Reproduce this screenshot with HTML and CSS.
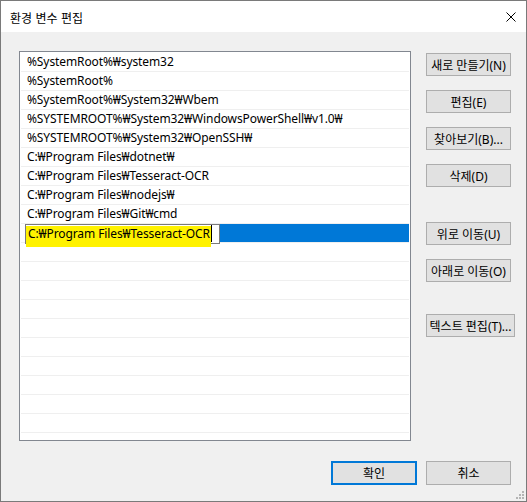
FILE: index.html
```html
<!DOCTYPE html>
<html lang="ko">
<head>
    <meta charset="UTF-8">
    <title>환경 변수 편집</title>
    <link rel="stylesheet" href="styles.css">
</head>
<body>

<div class="window">
    <div class="titlebar">
        <span class="title">환경 변수 편집</span>
        <svg class="close" width="10" height="10" viewBox="0 0 10 10">
            <path d="M0.5 0.5 L9.5 9.5 M9.5 0.5 L0.5 9.5" stroke="#000" stroke-width="1"/>
        </svg>
    </div>

    <div class="content">
        <!-- 경로 목록 -->
        <div class="list">
            <div class="row">%SystemRoot%₩system32</div>
            <div class="row">%SystemRoot%</div>
            <div class="row">%SystemRoot%₩System32₩Wbem</div>
            <div class="row">%SYSTEMROOT%₩System32₩WindowsPowerShell₩v1.0₩</div>
            <div class="row">%SYSTEMROOT%₩System32₩OpenSSH₩</div>
            <div class="row">C:₩Program Files₩dotnet₩</div>
            <div class="row">C:₩Program Files₩Tesseract-OCR</div>
            <div class="row">C:₩Program Files₩nodejs₩</div>
            <div class="row">C:₩Program Files₩Git₩cmd</div>
            <div class="row selected">
                <div class="edit">
                    <span class="mark"></span>
                    <span class="edit-text">C:₩Program Files₩Tesseract-OCR</span>
                </div>
                <div class="sel-fill"></div>
            </div>
            <div class="row"></div>
            <div class="row"></div>
            <div class="row"></div>
            <div class="row"></div>
            <div class="row"></div>
            <div class="row"></div>
            <div class="row"></div>
            <div class="row"></div>
            <div class="row"></div>
            <div class="row"></div>
            <div class="row"></div>
        </div>

        <!-- 오른쪽 버튼 -->
        <div class="side">
            <button class="btn">새로 만들기(N)</button>
            <button class="btn">편집(E)</button>
            <button class="btn">찾아보기(B)...</button>
            <button class="btn">삭제(D)</button>
            <button class="btn group">위로 이동(U)</button>
            <button class="btn">아래로 이동(O)</button>
            <button class="btn text-edit">텍스트 편집(T)...</button>
        </div>
    </div>

    <div class="actions">
        <button class="btn ok">확인</button>
        <button class="btn">취소</button>
    </div>

    <svg class="grip" width="8" height="8" viewBox="0 0 8 8">
        <rect x="6" y="0" width="2" height="2" fill="#b4b4b4"/>
        <rect x="3" y="3" width="2" height="2" fill="#b4b4b4"/>
        <rect x="6" y="3" width="2" height="2" fill="#b4b4b4"/>
        <rect x="0" y="6" width="2" height="2" fill="#b4b4b4"/>
        <rect x="3" y="6" width="2" height="2" fill="#b4b4b4"/>
        <rect x="6" y="6" width="2" height="2" fill="#b4b4b4"/>
    </svg>
</div>

</body>
</html>
```

FILE: styles.css
```css
body {
    margin: 0;
    font-family: "Noto Sans", "Noto Sans CJK KR", sans-serif;
    font-size: 12px;
    color: #000;
}

.window {
    width: 527px;
    height: 502px;
    box-sizing: border-box;
    border: 1px solid #7a7a7a;
    background-color: #f0f0f0;
    position: relative;
}

.titlebar {
    height: 31px;
    background-color: #fff;
    display: flex;
    align-items: center;
    justify-content: space-between;
    padding: 0 10px 0 9px;
}

.title {
    font-family: "Noto Sans CJK KR", sans-serif;
    padding-top: 1px;
}

.content {
    display: flex;
    gap: 15px;
    padding: 19px 15px 0 18px;
}

/* 목록 */
.list {
    flex: none;
    width: 392px;
    height: 390px;
    box-sizing: border-box;
    border: 1px solid #828790;
    background-color: #fff;
    padding: 1px 1px 0;
    overflow: hidden;
    letter-spacing: -0.1px;
}

.row {
    height: 18px;
    line-height: 18px;
    border-bottom: 1px solid #efefef;
    padding-left: 6px;
    white-space: nowrap;
}

.row.selected {
    display: flex;
    padding-left: 4px;
}

.edit {
    position: relative;
    width: 195px;
    height: 20px;
    box-sizing: border-box;
    border: 1px solid #7a7a7a;
    background-color: #fff;
    padding-left: 2px;
}

.mark {
    position: absolute;
    left: 0;
    top: 1px;
    width: 185px;
    height: 21px;
    background-color: #fff200;
}

.edit-text {
    position: relative;
    border-right: 1px solid #000;
    padding-right: 1px;
}

.sel-fill {
    flex: 1;
    background-color: #0078d7;
}

/* 버튼 */
.side {
    flex: none;
    width: 85px;
    display: flex;
    flex-direction: column;
    padding-top: 2px;
}

.btn {
    width: 85px;
    height: 23px;
    box-sizing: border-box;
    border: 1px solid #adadad;
    background-color: #e1e1e1;
    font-family: "Noto Sans", "Noto Sans CJK KR", sans-serif;
    font-size: 12px;
    color: #000;
    padding: 0;
    white-space: nowrap;
}

.side .btn + .btn {
    margin-top: 14px;
}

.side .btn.group {
    margin-top: 35px;
}

.side .btn.text-edit {
    margin-top: 32px;
    width: 89px;
}

.actions {
    display: flex;
    justify-content: flex-end;
    gap: 9px;
    padding: 20px 15px 0 0;
}

.actions .btn {
    height: 24px;
}

.actions .ok {
    width: 86px;
    border: 2px solid #0078d7;
}

.grip {
    position: absolute;
    right: 2px;
    bottom: 2px;
}
```
